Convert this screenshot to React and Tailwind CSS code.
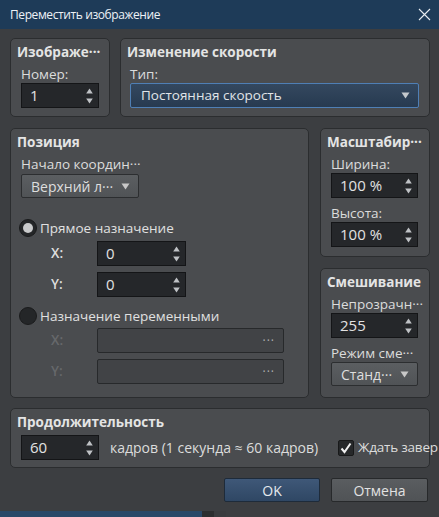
import React from 'react';

const font = { fontFamily: '"Open Sans", "Noto Sans", "DejaVu Sans", sans-serif' };

function SpinArrows() {
  return (
    <svg width="7" height="16" viewBox="0 0 7 16" className="shrink-0">
      <path d="M3.5 0.5 L6.8 5.5 L0.2 5.5 Z" fill="#bfc2c5" />
      <path d="M3.5 15.5 L6.8 10.5 L0.2 10.5 Z" fill="#bfc2c5" />
    </svg>
  );
}

function Spin({ value, w = 'w-[78px]' }) {
  return (
    <div className={`${w} shrink-0 h-[25px] flex items-center justify-between pl-[8px] pr-[5px] bg-[#25272a] border border-[#141517] text-[15px] text-[#e2e2e2]`}>
      <span>{value}</span>
      <SpinArrows />
    </div>
  );
}

function Arrow({ color = '#c8c8c8' }) {
  return (
    <svg width="9" height="7" viewBox="0 0 9 7">
      <path d="M0.5 0.5 L8.5 0.5 L4.5 6.5 Z" fill={color} />
    </svg>
  );
}

function Combo({ text, w }) {
  return (
    <div className={`${w} h-[24px] flex items-center justify-between pl-[9px] pr-[8px] rounded-[2px] border border-[#2c2e30] bg-gradient-to-b from-[#5b5e61] to-[#505356] text-[14px] text-[#dedede]`}>
      <span className="whitespace-nowrap">{text}</span>
      <Arrow />
    </div>
  );
}

function Group({ title, className = '', children }) {
  return (
    <div className={`rounded-[5px] border border-[#2b2d2f] bg-[#4a4c4f] ${className}`}>
      <div className="pl-[6px] pt-[4px] h-[26px] leading-[18px] text-[13.5px] font-bold text-[#e4e4e4] whitespace-nowrap">{title}</div>
      {children}
    </div>
  );
}

function Label({ children, className = '' }) {
  return <div className={`h-[18px] leading-[18px] text-[13.5px] text-[#dcdcdc] whitespace-nowrap ${className}`}>{children}</div>;
}

function Radio({ checked }) {
  return (
    <div className="w-[18px] h-[18px] rounded-full bg-[#242628] border border-[#1a1b1c] flex items-center justify-center">
      {checked && <div className="w-[10px] h-[10px] rounded-full bg-[#c9cacb]" />}
    </div>
  );
}

function DisabledField() {
  return (
    <div className="w-[187px] h-[25px] rounded-[2px] border border-[#27292b] bg-[#414346] flex items-center justify-end pr-[8px] text-[12px] text-[#b0b0b0] tracking-[1px]">
      ···
    </div>
  );
}

export default function App() {
  return (
    <div className="w-[439px] h-[517px] overflow-hidden bg-[#3c3e41] flex flex-col" style={font}>
      {/* title bar */}
      <div className="h-[29px] shrink-0 bg-[#1e3b58] flex items-center justify-between pl-[10px] pr-[8px]">
        <span className="text-[12px] tracking-[-0.4px] text-[#eef2f6]">Переместить изображение</span>
        <svg width="13" height="13" viewBox="0 0 13 13">
          <path d="M1 1 L12 12 M12 1 L1 12" stroke="#e8ecf0" strokeWidth="1.1" />
        </svg>
      </div>

      <div className="flex-1 flex flex-col pl-[10px] pr-[9px] pt-[9px]">
        {/* row 1 */}
        <div className="flex gap-[10px] h-[79px]">
          <Group title="Изображе···" className="w-[100px]">
            <div className="pl-[10px]">
              <Label>Номер:</Label>
              <Spin value="1" />
            </div>
          </Group>
          <Group title="Изменение скорости" className="flex-1">
            <div className="pl-[9px] pr-[10px]">
              <Label>Тип:</Label>
              <div className="h-[25px] flex items-center justify-between pl-[10px] pr-[8px] rounded-[2px] border border-[#4f7fb5] bg-gradient-to-b from-[#34485f] to-[#273a50] text-[13.5px] text-[#e0e4e8]">
                <span>Постоянная скорость</span>
                <Arrow color="#c4c8cc" />
              </div>
            </div>
          </Group>
        </div>

        {/* row 2 */}
        <div className="flex gap-[11px] mt-[11px] h-[270px]">
          <Group title="Позиция" className="w-[299px]">
            <div className="pl-[10px]">
              <Label>Начало координ···</Label>
              <div className="mt-[1px]">
                <Combo text="Верхний л···" w="w-[118px]" />
              </div>
              <div className="flex items-center gap-[3px] h-[18px] mt-[21px] -ml-[2px]">
                <Radio checked />
                <span className="text-[13.5px] text-[#e0e0e0]">Прямое назначение</span>
              </div>
              <div className="flex items-center mt-[4px]">
                <span className="w-[76px] pl-[30px] text-[13.5px] font-semibold text-[#dedede]">X:</span>
                <Spin value="0" w="w-[89px]" />
              </div>
              <div className="flex items-center mt-[6px]">
                <span className="w-[76px] pl-[30px] text-[13.5px] font-semibold text-[#dedede]">Y:</span>
                <Spin value="0" w="w-[89px]" />
              </div>
              <div className="flex items-center gap-[3px] h-[18px] mt-[10px] -ml-[2px]">
                <Radio />
                <span className="text-[13.5px] text-[#e0e0e0]">Назначение переменными</span>
              </div>
              <div className="flex items-center mt-[3px]">
                <span className="w-[76px] pl-[30px] text-[13.5px] font-semibold text-[#66686b]">X:</span>
                <DisabledField />
              </div>
              <div className="flex items-center mt-[6px]">
                <span className="w-[76px] pl-[30px] text-[13.5px] font-semibold text-[#66686b]">Y:</span>
                <DisabledField />
              </div>
            </div>
          </Group>

          <div className="w-[110px] flex flex-col gap-[11px]">
            <Group title="Масштабир···" className="h-[129px]">
              <div className="pl-[10px]">
                <Label>Ширина:</Label>
                <Spin value="100 %" w="w-[87px]" />
                <Label className="mt-[6px]">Высота:</Label>
                <Spin value="100 %" w="w-[87px]" />
              </div>
            </Group>
            <Group title="Смешивание" className="flex-1">
              <div className="pl-[10px]">
                <Label>Непрозрачн···</Label>
                <Spin value="255" w="w-[87px]" />
                <Label className="mt-[6px]">Режим сме···</Label>
                <Combo text="Станд···" w="w-[87px]" />
              </div>
            </Group>
          </div>
        </div>

        {/* row 3 */}
        <Group title="Продолжительность" className="mt-[10px] h-[60px]">
          <div className="pl-[10px] flex items-center">
            <Spin value="60" />
            <span className="ml-[11px] w-[228px] shrink-0 text-[14px] text-[#dcdcdc] whitespace-nowrap">кадров (1 секунда ≈ 60 кадров)</span>
            <div className="shrink-0 w-[16px] h-[16px] rounded-[2px] bg-[#26282a] border border-[#18191a] flex items-center justify-center">
              <svg width="12" height="12" viewBox="0 0 12 12">
                <path d="M1.5 6.5 L4.5 10 L10.5 1.5" stroke="#f0f0f0" strokeWidth="2" fill="none" />
              </svg>
            </div>
            <span className="ml-[4px] text-[13.5px] tracking-[-0.2px] text-[#dcdcdc] whitespace-nowrap">Ждать завер</span>
          </div>
        </Group>

        {/* buttons */}
        <div className="flex justify-end gap-[11px] mt-[10px] pr-[2px]">
          <div className="w-[96px] h-[24px] rounded-[2px] border border-[#1e2b3a] bg-gradient-to-b from-[#3f5878] to-[#2f4764] flex items-center justify-center text-[14px] text-[#e6eaee]">OK</div>
          <div className="w-[97px] h-[24px] rounded-[2px] border border-[#27292b] bg-gradient-to-b from-[#5a5d60] to-[#505356] flex items-center justify-center text-[14px] text-[#e2e2e2]">Отмена</div>
        </div>
      </div>

      {/* window behind */}
      <div className="h-[6px] shrink-0 flex">
        <div className="w-[202px] bg-[#2a4868]" />
        <div className="w-[12px] bg-[#2c2e30]" />
        <div className="w-[12px] bg-[#3a3c3f]" />
        <div className="flex-1 bg-[#3c3e41]" />
      </div>
    </div>
  );
}
